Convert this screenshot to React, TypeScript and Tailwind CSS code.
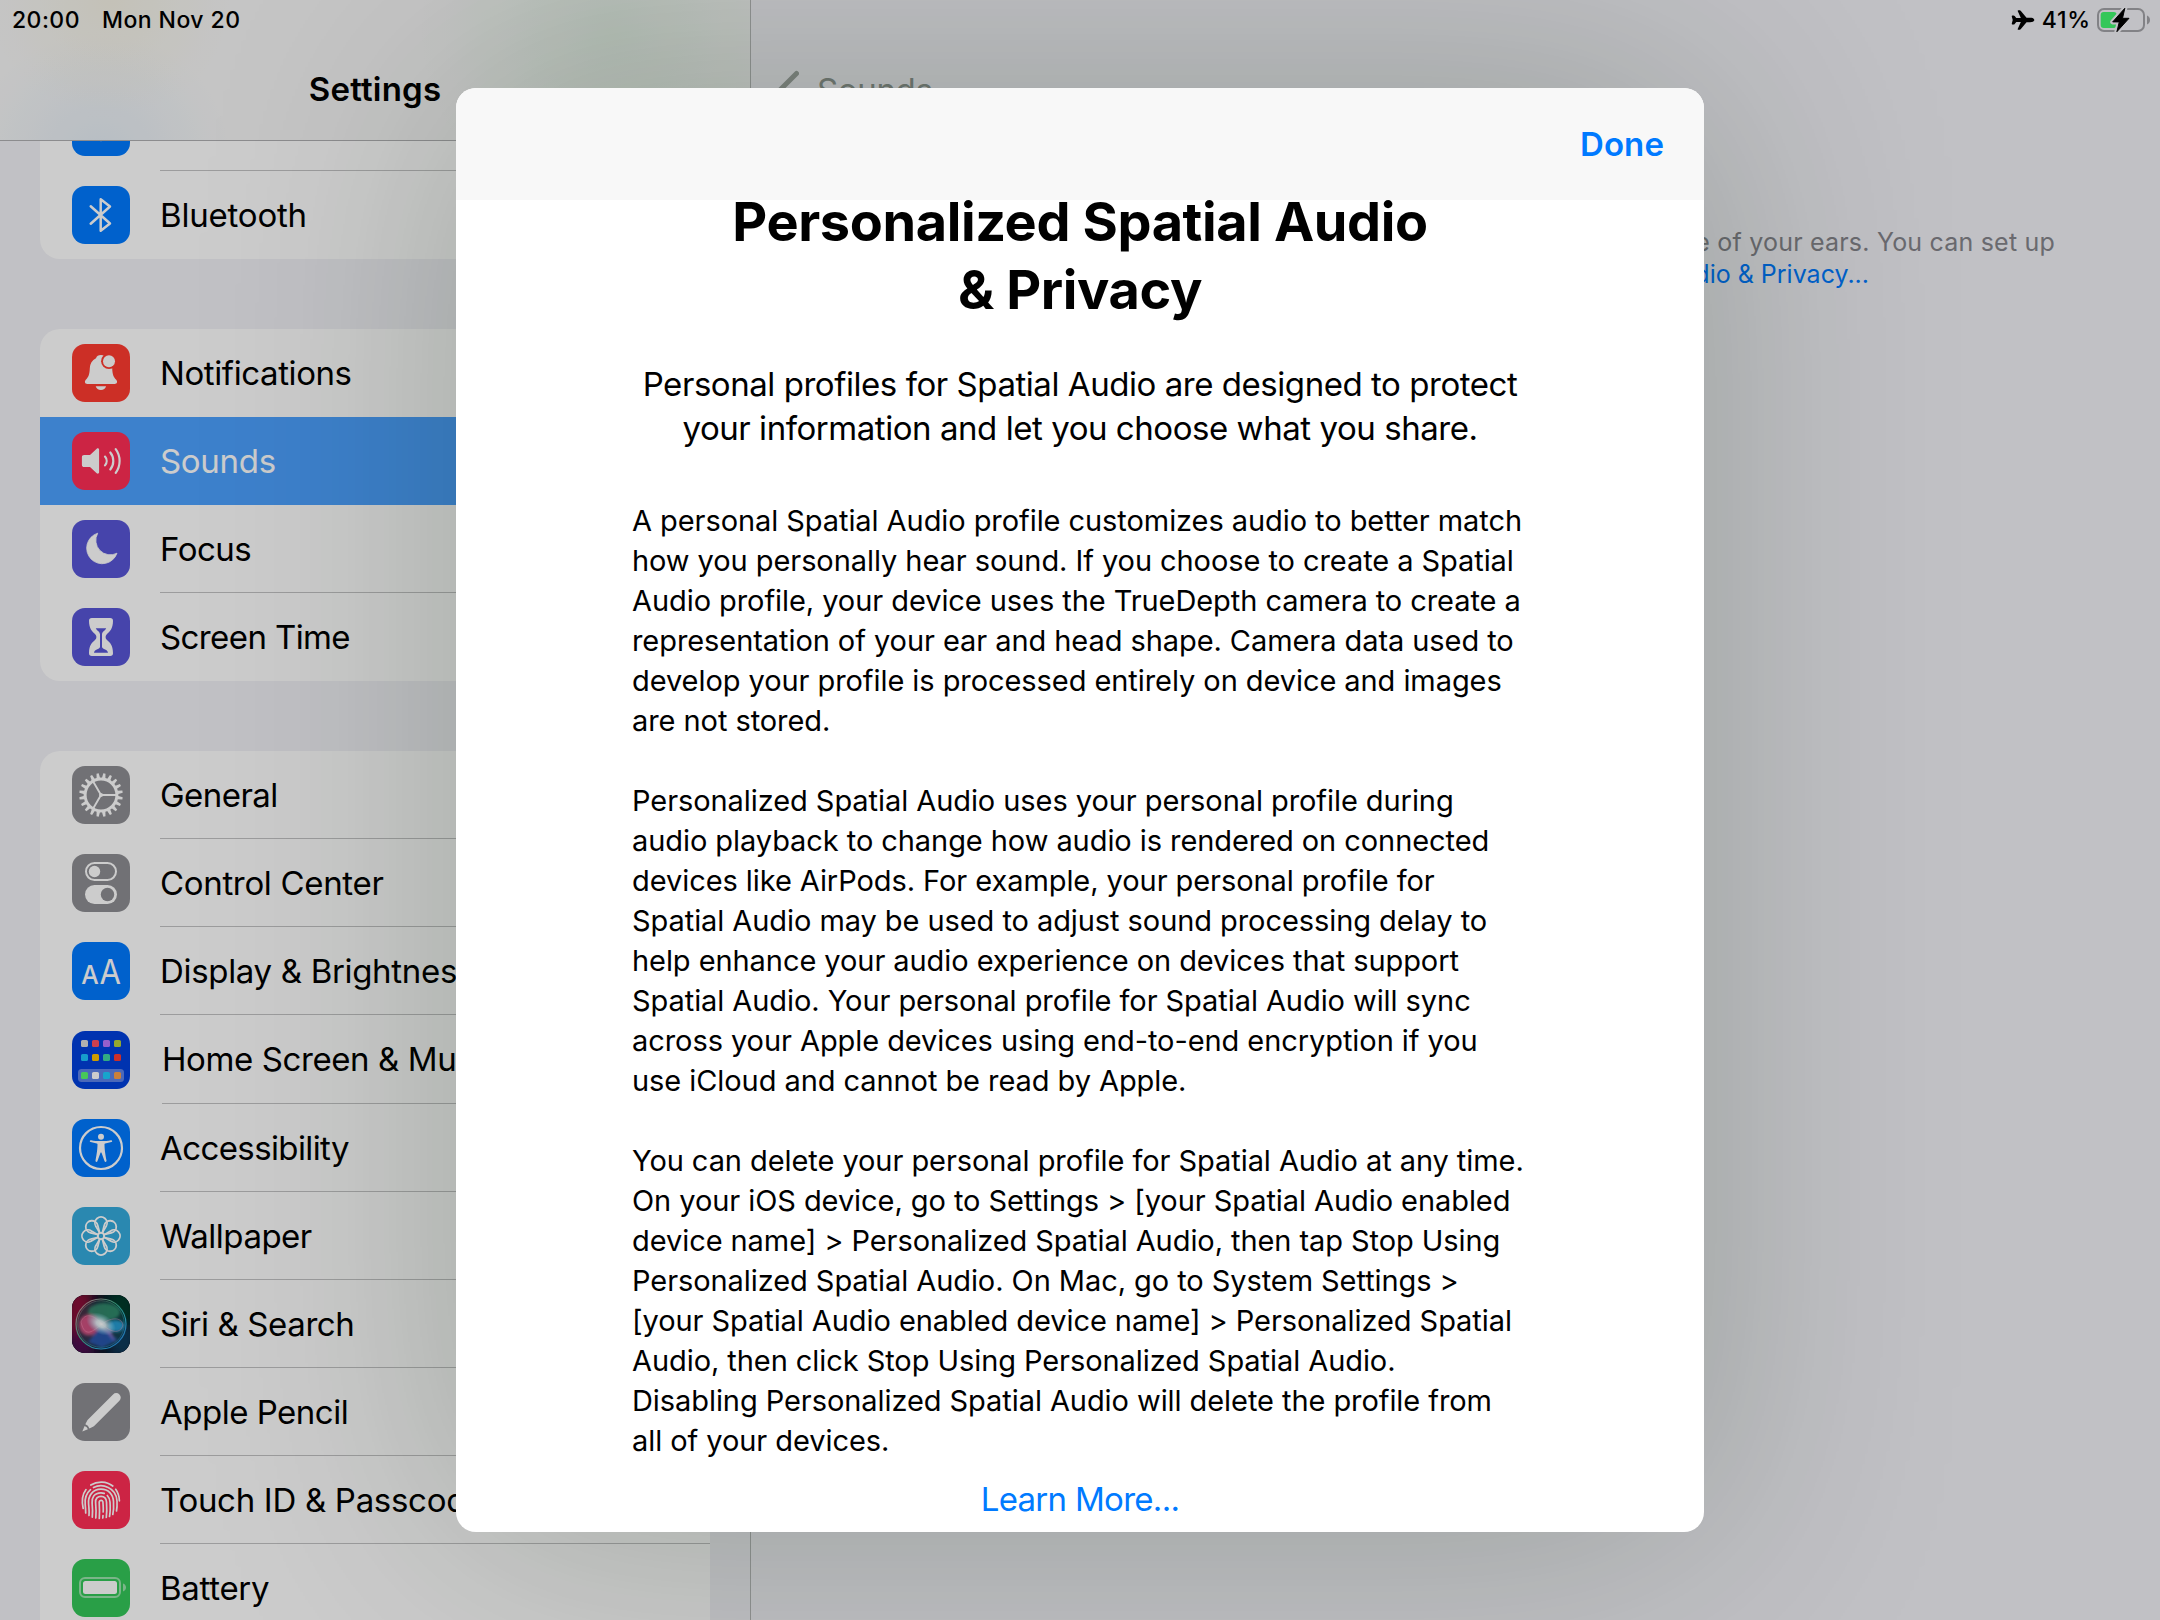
import type { ReactNode } from "react";
import { IoAirplane } from "react-icons/io5";

const GRAY = "bg-[#8e8e93]";
const BLUE = "bg-[#007aff]";
const INDIGO = "bg-[#5856d6]";
const PINK = "bg-[#ff2d55]";

function Glyph({ children }: { children: ReactNode }) {
  return (
    <svg viewBox="0 0 58 58" className="block size-[58px]" fill="none">
      {children}
    </svg>
  );
}

const WifiGlyph = () => (
  <Glyph>
    <path d="M12 26a24 24 0 0 1 34 0M18 32a15.600 15.600 0 0 1 22 0M24 38a7 7 0 0 1 10 0" stroke="#fff" strokeWidth="4" />
    <path d="M26 40l3 3.500l3-3.500a4.500 4.500 0 0 0-6 0z" fill="#fff" />
  </Glyph>
);

const BluetoothGlyph = () => (
  <Glyph>
    <path d="M18.700 20.300L38 37.500L28.700 44.800V13.200L38 20.500L18.700 37.700" stroke="#fff" strokeWidth="2.500" strokeLinecap="round" strokeLinejoin="round" />
  </Glyph>
);

const BellGlyph = () => (
  <Glyph>
    <path d="M29 11c-2.700 0-4.300 1.200-5 3.200c-4 2-6 5.500-6.200 10c-.3 6.300-1.100 8.300-4 11.600c-1.600 2-.9 4.200 1.500 4.200h27.400c2.400 0 3.100-2.200 1.500-4.200c-2.900-3.300-3.700-5.300-4-11.600c-.2-4.500-2.200-8-6.200-10c-.7-2-2.300-3.200-5-3.200z" fill="#fff" />
    <path d="M23.700 42.300h10.400c-.6 2.300-2.600 3.700-5.200 3.700s-4.600-1.400-5.200-3.700z" fill="#fff" />
    <circle cx="37" cy="17.200" r="7.900" fill="#ff3b30" />
    <circle cx="37" cy="17.200" r="6" fill="#fff" />
  </Glyph>
);

const SpeakerGlyph = () => (
  <Glyph>
    <path d="M12.200 23H18l6.700-6.200c1-.9 2.400-.4 2.400 1v22.500c0 1.400-1.400 1.900-2.400 1L18 35h-5.800c-1.500 0-2.300-.8-2.300-2.300v-7.400c0-1.500.8-2.300 2.300-2.300z" fill="#fff" />
    <path d="M33 24.600c2.200 2.500 2.200 6.200 0 8.800M38.300 20.500c4 4.800 4 12 0 17M43.700 17.200c5.200 7 5.200 16.600 0 23.600" stroke="#fff" strokeWidth="2.200" strokeLinecap="round" />
  </Glyph>
);

const MoonGlyph = () => (
  <Glyph>
    <path d="M25.700 13.200A15.600 15.600 0 1 0 45 33.200A14.500 14.500 0 0 1 25.700 13.200z" fill="#fff" stroke="#fff" strokeWidth=".8" strokeLinejoin="round" />
  </Glyph>
);

const HourglassGlyph = () => (
  <Glyph>
    <path d="M17 12.800C17 11 18 10 19.800 10h18.400c1.800 0 2.800 1 2.800 2.800c0 8-3.200 10.700-6 13.100c-1.900 1.700-1.900 4.500 0 6.200c2.800 2.400 6 5.100 6 13.100c0 1.800-1 2.800-2.800 2.800H19.800c-1.800 0-2.800-1-2.800-2.800c0-8 3.200-10.700 6-13.100c1.900-1.700 1.900-4.500 0-6.200c-2.800-2.400-6-5.100-6-13.100z" fill="#fff" />
    <path d="M23.800 20.200h10.400c-.7 2.300-4.200 3-4.200 6.300V39c.4 2.200 6 2.600 6 5.700H22c0-3.100 5.600-3.500 6-5.700V26.500c0-3.300-3.500-4-4.200-6.300z" fill="#5856d6" />
  </Glyph>
);

const TEETH = Array.from({ length: 20 }, (_, i) => i * 18 + 9);
const GearGlyph = () => (
  <Glyph>
    {TEETH.map((a) => (
      <path key={a} d="M27.200 12.500L27.900 7.200h2.200L30.800 12.500z" fill="#fff" transform={`rotate(${a} 29 29)`} />
    ))}
    <circle cx="29" cy="29" r="15.900" stroke="#fff" strokeWidth="3" />
    <path d="M29 29H45M29 29L21 15.200M29 29L21 42.800" stroke="#fff" strokeWidth="1.900" />
    <circle cx="29" cy="29" r="2" fill="#fff" />
  </Glyph>
);

const SwitchesGlyph = () => (
  <Glyph>
    <rect x="14" y="9" width="30" height="17" rx="8.500" stroke="#fff" strokeWidth="2" />
    <circle cx="22.500" cy="17.500" r="5.700" fill="#fff" />
    <rect x="13" y="31" width="32" height="19" rx="9.500" fill="#fff" />
    <circle cx="35.500" cy="40.500" r="6.700" fill="#8e8e93" />
  </Glyph>
);

const LettersGlyph = () => (
  <Glyph>
    <text x="9.300" y="41.500" fontFamily="Inter, sans-serif" fontSize="26" fontWeight="500" fill="#fff" textLength="17.500" lengthAdjust="spacingAndGlyphs">A</text>
    <text x="27.500" y="41.500" fontFamily="Inter, sans-serif" fontSize="33.500" fontWeight="400" fill="#fff" textLength="21.500" lengthAdjust="spacingAndGlyphs">A</text>
  </Glyph>
);

const APPS = [
  { y: 9, fills: ["#dcdcdc", "#ff5063", "#ba77ff", "#b9d23b"] },
  { y: 23, fills: ["#1cc5ff", "#ffc300", "#40d6a3", "#ff3b34"] },
  { y: 41, fills: ["#59fa70", "#ffffff", "#1ecdff", "#ffa148"] },
];
const AppsGlyph = () => (
  <Glyph>
    <rect x="6" y="38" width="46" height="13" rx="3.500" fill="#5d82e9" />
    {APPS.map((row) =>
      row.fills.map((fill, i) => <rect key={fill} x={9 + i * 11} y={row.y} width="7" height="7" rx="1.600" fill={fill} />),
    )}
  </Glyph>
);

const PersonGlyph = () => (
  <Glyph>
    <circle cx="29" cy="29" r="21" stroke="#fff" strokeWidth="2.200" />
    <circle cx="29" cy="17.700" r="3" fill="#fff" />
    <path d="M19 21.200c3 .6 6.500.9 10 .9s7-.3 10-.9c1.300-.2 1.700 1.500.4 1.900l-6.200 1.300c-.5.100-.7.500-.7.900c.1 5.200.6 9.200 2 16.200c.3 1.500-1.500 2-2 .6L29.600 34c-.2-.6-1-.6-1.200 0l-2.900 8.100c-.5 1.400-2.300.9-2-.6c1.400-7 1.900-11 2-16.200c0-.4-.2-.8-.7-.9l-6.200-1.300c-1.300-.4-.9-2.100.4-1.900z" fill="#fff" />
  </Glyph>
);

const PETALS = [0, 45, 90, 135, 180, 225, 270, 315];
const FlowerGlyph = () => (
  <Glyph>
    {PETALS.map((a) => (
      <path key={a} d="M28 26.200L23.900 19.400A6.100 6.100 0 1 1 34.100 19.400L30 26.200" stroke="#fff" strokeWidth="1.800" transform={`rotate(${a} 29 29)`} />
    ))}
    <circle cx="29" cy="29" r="3.100" stroke="#fff" strokeWidth="1.800" />
  </Glyph>
);

const SiriGlyph = () => (
  <Glyph>
    <defs>
      <linearGradient id="siriEdge" x1="0" y1="0" x2="1" y2="1">
        <stop offset="0" stopColor="#d98a9c" />
        <stop offset=".45" stopColor="#3fb08c" />
        <stop offset=".7" stopColor="#2fb6d8" />
        <stop offset="1" stopColor="#2a6fe0" />
      </linearGradient>
      <radialGradient id="siriGlow">
        <stop offset="0" stopColor="#fff" />
        <stop offset=".3" stopColor="#e9fbff" stopOpacity=".9" />
        <stop offset="1" stopColor="#9fe6ff" stopOpacity="0" />
      </radialGradient>
      <filter id="siriBlur" x="-50%" y="-50%" width="200%" height="200%">
        <feGaussianBlur stdDeviation="6" />
      </filter>
      <filter id="siriSoft" x="-50%" y="-50%" width="200%" height="200%">
        <feGaussianBlur stdDeviation="1.600" />
      </filter>
    </defs>
    <rect width="58" height="58" fill="#0a1424" />
    <g filter="url(#siriBlur)">
      <rect x="-6" y="-6" width="26" height="44" fill="#8a0d38" />
      <rect x="-4" y="38" width="26" height="26" fill="#500850" />
      <rect x="36" y="-6" width="28" height="34" fill="#003a2c" />
      <rect x="38" y="30" width="26" height="32" fill="#0a3a5c" />
    </g>
    <circle cx="29" cy="29" r="24" fill="#1c4a52" fillOpacity=".6" />
    <g filter="url(#siriSoft)">
      <ellipse cx="32" cy="17" rx="16" ry="9" fill="#3aa67c" fillOpacity=".7" />
      <ellipse cx="17" cy="30" rx="10" ry="10.500" fill="#e8568a" fillOpacity=".85" />
      <ellipse cx="44" cy="31" rx="8.500" ry="6" fill="#2aa6e0" fillOpacity=".9" />
      <path d="M16 47L29 31L46 45L30 53z" fill="#2c62cc" fillOpacity=".75" />
      <path d="M30 31l9 5l4 11z" fill="#a578d8" fillOpacity=".8" />
    </g>
    <path d="M9 27c4-10 13-7 21 2c8 8 18 11 21 1c-2-9-13-7-21-1c-9 7-17 15-21-2z" stroke="#ff9fc4" strokeOpacity=".45" strokeWidth=".9" />
    <ellipse cx="29" cy="29" rx="16" ry="10" fill="url(#siriGlow)" transform="rotate(28 29 29)" />
    <circle cx="29" cy="29" r="25" stroke="url(#siriEdge)" strokeWidth="1.200" />
    <circle cx="29" cy="29" r="23.300" stroke="url(#siriEdge)" strokeOpacity=".5" strokeWidth=".9" />
  </Glyph>
);

const PencilGlyph = () => (
  <Glyph>
    <g transform="translate(10.300 48.500) rotate(-45)" fill="#fff">
      <path d="M0 0L5.600-2.300Q7 0 5.600 2.300z" />
      <path d="M7.200-2.900L11.500-4.300Q12.300-4.500 13-4.500H48A4.500 4.500 0 0 1 48 4.500H13Q12.300 4.500 11.500 4.300L7.200 2.900Q8.600 0 7.200-2.900z" />
    </g>
  </Glyph>
);

const RIDGES = [
  "M27.300 47.500C27.700 42 27.500 36 27.200 31a1.900 1.900 0 0 1 3.700-.2C31.300 36 31.400 38 31.200 41M31 44.500L30.800 47",
  "M23.800 47C24.300 42 24 36 23.600 31.500C23.300 27.500 25.700 25.300 29 25.300c3.400 0 5.300 2.300 5.500 5.700C34.900 37 35 41 34.300 46.500",
  "M20.300 46.200C20.800 41 20.500 36 20.100 32C19.600 27 22 21.800 29 21.800c1.200 0 2.200.2 3.200.6M35.300 24.500c1.700 1.800 2.500 4 2.700 6.500c.4 5.500.4 10-.5 14.500",
  "M17 44.500C17.300 41 17 37 16.600 33C15.800 25 20.500 18.200 29 18.200c7.500 0 12 5 12.500 12.300c.3 5 .2 9-.7 13",
  "M13.700 42C13.700 39 13.500 36.500 13.200 33.500c-.6-6 1.300-11.300 5.300-14.800M21.500 16.600c8.500-4.400 22.800-.6 23.500 13.400c.2 4 .1 7-.5 10",
  "M11.200 37.500C9.500 30 10.300 23.500 14 18.600M18.800 14C25.500 9.800 34.500 10 40.800 15M43.700 18.300c2.300 3.200 3.600 7 3.700 11.500",
];
const FingerprintGlyph = () => (
  <Glyph>
    {RIDGES.map((d) => (
      <path key={d} d={d} stroke="#fff" strokeWidth="1.700" strokeLinecap="round" />
    ))}
  </Glyph>
);

const BatteryGlyph = () => (
  <Glyph>
    <rect x="8" y="19" width="40" height="19" rx="5" stroke="#fff" strokeOpacity=".5" strokeWidth="2" />
    <rect x="11" y="22" width="34" height="13" rx="2.500" fill="#fff" />
    <path d="M51 24.500c1.900.6 3 2.200 3 4s-1.100 3.400-3 4z" fill="#fff" fillOpacity=".5" />
  </Glyph>
);

type Item = { label: string; icon: ReactNode; tile: string; tracking: string; selected?: boolean; line?: boolean; tall?: boolean };

const CONNECTIVITY: Item[] = [
  { label: "", icon: <WifiGlyph />, tile: BLUE, tracking: "tracking-[-0.3px]", line: true },
  { label: "Bluetooth", icon: <BluetoothGlyph />, tile: BLUE, tracking: "tracking-[-0.2px]" },
];
const ALERTS: Item[] = [
  { label: "Notifications", icon: <BellGlyph />, tile: "bg-[#ff3b30]", tracking: "tracking-[-0.4px]" },
  { label: "Sounds", icon: <SpeakerGlyph />, tile: PINK, tracking: "tracking-[-0.3px]", selected: true },
  { label: "Focus", icon: <MoonGlyph />, tile: INDIGO, tracking: "tracking-[-0.5px]", line: true },
  { label: "Screen Time", icon: <HourglassGlyph />, tile: INDIGO, tracking: "tracking-[-0.6px]" },
];
const SYSTEM: Item[] = [
  { label: "General", icon: <GearGlyph />, tile: GRAY, tracking: "tracking-[-0.55px]", line: true },
  { label: "Control Center", icon: <SwitchesGlyph />, tile: GRAY, tracking: "tracking-[-0.33px]", line: true },
  { label: "Display & Brightness", icon: <LettersGlyph />, tile: BLUE, tracking: "tracking-[-0.32px]", line: true },
  { label: "Home Screen & Multitasking", icon: <AppsGlyph />, tile: "bg-[#0040dc]", tracking: "tracking-[-0.4px]", line: true, tall: true },
  { label: "Accessibility", icon: <PersonGlyph />, tile: BLUE, tracking: "tracking-[-0.6px]", line: true },
  { label: "Wallpaper", icon: <FlowerGlyph />, tile: "bg-[#35aadc]", tracking: "tracking-[-0.5px]", line: true },
  { label: "Siri & Search", icon: <SiriGlyph />, tile: "bg-[#0a1424]", tracking: "tracking-[-0.38px]", line: true },
  { label: "Apple Pencil", icon: <PencilGlyph />, tile: GRAY, tracking: "tracking-[-0.5px]", line: true },
  { label: "Touch ID & Passcode", icon: <FingerprintGlyph />, tile: PINK, tracking: "tracking-[-0.3px]", line: true },
  { label: "Battery", icon: <BatteryGlyph />, tile: "bg-[#34c759]", tracking: "tracking-[-0.3px]" },
];

function Row({ item }: { item: Item }) {
  return (
    <div className={`flex shrink-0 items-center pl-8 ${item.tall ? "h-[89px]" : "h-[88px]"} ${item.selected ? "bg-[#4da2ff]" : ""}`}>
      <div className={`size-[58px] shrink-0 overflow-hidden rounded-[13px] ${item.tile}`}>{item.icon}</div>
      <div
        className={`flex h-full flex-1 items-center border-b pt-[2px] whitespace-nowrap text-[33px] ${item.tall ? "ml-8" : "ml-[30px]"} ${item.tracking} ${
          item.line ? "border-[#c3c3c5]" : "border-transparent"
        } ${item.selected ? "text-white" : "text-black"}`}
      >
        {item.label}
      </div>
    </div>
  );
}

function Group({ items, className }: { items: Item[]; className: string }) {
  return (
    <div className={`flex shrink-0 flex-col overflow-hidden bg-white ${className}`}>
      {items.map((item) => (
        <Row key={item.label} item={item} />
      ))}
    </div>
  );
}

function Sidebar() {
  return (
    <aside className="flex h-full w-[751px] shrink-0 flex-col border-r border-[#b6b8b8]">
      <header className="flex h-[141px] shrink-0 justify-center border-b border-[#b0b0b2] bg-[#f7f7f7] bg-[radial-gradient(circle_at_110px_0px,rgba(240,225,170,0.22),transparent_120px),radial-gradient(circle_at_100px_160px,rgba(170,205,240,0.24),transparent_130px),radial-gradient(circle_at_610px_30px,rgba(150,215,160,0.18),transparent_190px)] pt-[67px]">
        <h1 className="text-[33px] leading-[44px] font-semibold tracking-[0.2px] text-black">Settings</h1>
      </header>
      <nav className="flex flex-1 flex-col overflow-hidden px-10">
        <Group items={CONNECTIVITY} className="-mt-[58px] rounded-[20px]" />
        <Group items={ALERTS} className="mt-[70px] rounded-[20px]" />
        <Group items={SYSTEM} className="mt-[70px] rounded-t-[20px]" />
      </nav>
    </aside>
  );
}

function Detail() {
  return (
    <main className="flex flex-1 flex-col overflow-hidden">
      <header className="flex h-[141px] shrink-0 items-start gap-[18px] pt-[68px] pl-[24px]">
        <svg viewBox="0 0 24 44" className="h-11 w-6" fill="none">
          <path d="M21.500 5.500L5 22L21.500 38.500" stroke="#9fa5a1" strokeWidth="5" strokeLinecap="round" strokeLinejoin="round" />
        </svg>
        <span className="text-[33px] leading-[44px] tracking-[-0.35px] text-[#8f9691]">Sounds</span>
      </header>
      <div className="mt-[85px] flex flex-col items-end text-[25px] leading-8 whitespace-nowrap">
        <p className="mr-[105px] tracking-[0.2px] text-[#85858b]">the shape of your ears. You can set up</p>
        <p className="mr-[291px] tracking-[0px] text-[#007aff]">Spatial Audio &amp; Privacy...</p>
      </div>
    </main>
  );
}

function StatusBar() {
  return (
    <div className="absolute inset-x-0 top-0 flex h-10 items-center justify-between pr-[8px] pl-3 text-[23px] font-medium text-black">
      <div className="flex gap-[22px] tracking-[0.45px]">
        <span>20:00</span>
        <span>Mon Nov 20</span>
      </div>
      <div className="flex items-center">
        <IoAirplane className="mr-[7px] size-6" />
        <span className="mr-[5px] tracking-[0.8px]">41%</span>
        <svg viewBox="0 0 56 26" className="h-[26px] w-14" fill="none">
          <rect x="2" y="2" width="46" height="22" rx="6" stroke="#828286" strokeWidth="2" />
          <path d="M51 8.500c1.900.7 3 2.400 3 4.500s-1.100 3.800-3 4.500z" fill="#828286" />
          <rect x="4.700" y="5" width="16" height="16" rx="3" fill="#34c759" />
          <path d="M28.800 1.300L16.700 14.900H23.300L20.900 24.700L33 11.300H26.500z" fill="#000" stroke="#c2c2c6" strokeWidth="5" strokeLinejoin="round" />
          <path d="M28.800 1.300L16.700 14.900H23.300L20.900 24.700L33 11.300H26.500z" fill="#000" stroke="#000" strokeLinejoin="round" />
        </svg>
      </div>
    </div>
  );
}

const PARAGRAPHS = [
  [
    "A personal Spatial Audio profile customizes audio to better match",
    "how you personally hear sound. If you choose to create a Spatial",
    "Audio profile, your device uses the TrueDepth camera to create a",
    "representation of your ear and head shape. Camera data used to",
    "develop your profile is processed entirely on device and images",
    "are not stored.",
  ],
  [
    "Personalized Spatial Audio uses your personal profile during",
    "audio playback to change how audio is rendered on connected",
    "devices like AirPods. For example, your personal profile for",
    "Spatial Audio may be used to adjust sound processing delay to",
    "help enhance your audio experience on devices that support",
    "Spatial Audio. Your personal profile for Spatial Audio will sync",
    "across your Apple devices using end-to-end encryption if you",
    "use iCloud and cannot be read by Apple.",
  ],
  [
    "You can delete your personal profile for Spatial Audio at any time.",
    "On your iOS device, go to Settings > [your Spatial Audio enabled",
    "device name] > Personalized Spatial Audio, then tap Stop Using",
    "Personalized Spatial Audio. On Mac, go to System Settings >",
    "[your Spatial Audio enabled device name] > Personalized Spatial",
    "Audio, then click Stop Using Personalized Spatial Audio.",
    "Disabling Personalized Spatial Audio will delete the profile from",
    "all of your devices.",
  ],
];

function PrivacySheet() {
  return (
    <section className="flex h-[1444px] w-[1248px] flex-col overflow-hidden rounded-[20px] bg-white text-black shadow-[0_0_260px_rgba(0,30,5,0.22)]">
      <header className="flex h-28 shrink-0 items-center justify-end bg-[#f8f8f8] pr-[40px]">
        <button className="text-[33px] leading-[44px] font-semibold tracking-[0.1px] text-[#007aff]">Done</button>
      </header>
      <h2 className="relative -mt-[12px] text-center text-[54px] leading-[68px] font-bold tracking-[-0.38px] whitespace-pre">
        {"Personalized Spatial Audio\n& Privacy"}
      </h2>
      <p className="mt-[38px] text-center text-[33px] leading-[44px] tracking-[-0.45px] whitespace-pre">
        {"Personal profiles for Spatial Audio are designed to protect\nyour information and let you choose what you share."}
      </p>
      <div className="mt-[51px] flex flex-col gap-10 pl-[176px] text-[29px] leading-10 tracking-[-0.07px] whitespace-pre">
        {PARAGRAPHS.map((lines) => (
          <p key={lines[0]}>{lines.join("\n")}</p>
        ))}
      </div>
      <a className="mt-[16px] text-center text-[33px] leading-[44px] tracking-[-0.7px] text-[#007aff]">Learn More...</a>
    </section>
  );
}

export default function App() {
  return (
    <div className="relative flex h-[1620px] w-[2160px] overflow-hidden bg-[#f2f2f7] font-['Inter',sans-serif]">
      <Sidebar />
      <Detail />
      <div className="absolute inset-0 flex items-center justify-center bg-black/20">
        <PrivacySheet />
      </div>
      <StatusBar />
    </div>
  );
}
